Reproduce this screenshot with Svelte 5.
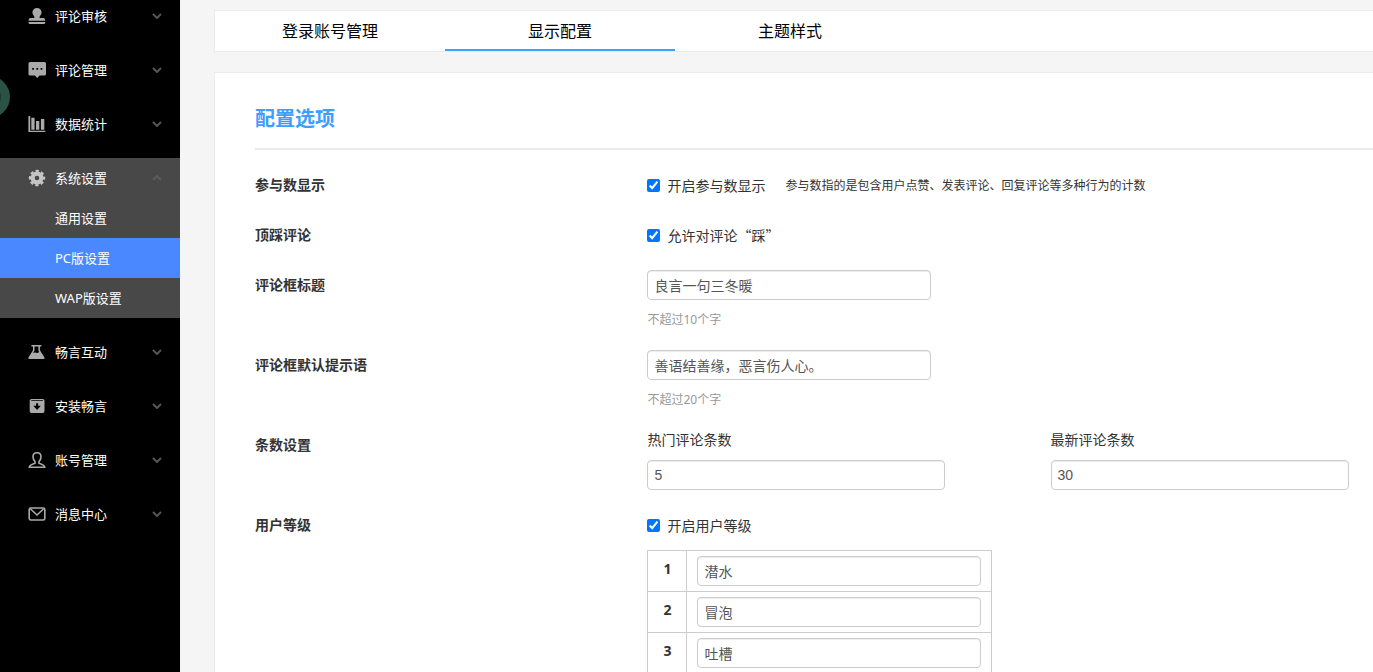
<script lang="ts">
  interface MenuItem {
    name: string;
    icon: string;
    children?: string[];
  }

  const menu: MenuItem[] = [
    { name: '评论审核', icon: 'stamp' },
    { name: '评论管理', icon: 'comment' },
    { name: '数据统计', icon: 'chart' },
    { name: '系统设置', icon: 'gear', children: ['通用设置', 'PC版设置', 'WAP版设置'] },
    { name: '畅言互动', icon: 'flask' },
    { name: '安装畅言', icon: 'install' },
    { name: '账号管理', icon: 'user' },
    { name: '消息中心', icon: 'mail' }
  ];

  const tabs = ['登录账号管理', '显示配置', '主题样式'];

  let openMenu = $state('系统设置');
  let activePage = $state('PC版设置');
  let activeTab = $state('显示配置');

  let showCount = $state(true);
  let allowDown = $state(true);
  let showLevel = $state(true);
  let boxTitle = $state('良言一句三冬暖');
  let boxHint = $state('善语结善缘，恶言伤人心。');
  let hotCount = $state('5');
  let newCount = $state('30');
  let levels = $state(['潜水', '冒泡', '吐槽']);

  function toggleMenu(item: MenuItem) {
    openMenu = openMenu === item.name ? '' : item.name;
  }
</script>

{#snippet menuIcon(icon: string)}
  <svg class="menu-icon" viewBox="0 0 18 18" aria-hidden="true">
    {#if icon === 'stamp'}
      <path d="M9 1a4.600 4.600 0 0 1 4.600 4.600c0 2.200-2.100 3-2.100 5.400h4q1.700 0 1.700 2.700H.5Q.5 11 2.200 11h4.300c0-2.400-2.100-3.200-2.100-5.400A4.600 4.600 0 0 1 9 1z" />
      <path d="M.5 14.900h16.700v.6q0 1.500-1.400 1.500H1.900q-1.400 0-1.400-1.500z" />
    {:else if icon === 'comment'}
      <path fill-rule="evenodd" d="M2 1h14.500q1.500 0 1.500 1.500V13q0 1.500-1.500 1.500h-5L9.200 17l-2.300-2.500H2Q.5 14.500.5 13V2.500Q.5 1 2 1zM4.200 7v1.700h1.700V7zM8.400 7v1.700h1.700V7zM12.600 7v1.700h1.700V7z" />
    {:else if icon === 'chart'}
      <path d="M.4 1h1.800v14.700h15.200V17H.4zM3.300 2.700h3.300v12H3.300zM8 6h3.300v8.700H8zM12.900 4h3.400v10.700h-3.400z" />
    {:else if icon === 'gear'}
      <circle class="gear-body" cx="9" cy="9" r="4.400" />
      <circle class="gear-teeth" cx="9" cy="9" r="7" />
    {:else if icon === 'flask'}
      <path fill-rule="evenodd" d="M3.400 2h10v1.400h-1.500v3.800l4.600 7.300q.5 1.500-1.200 1.500H1.600Q0 16 .4 14.500L5 7.200V3.400H3.400zM6.500 3.400v4.200L5 10q1.800-.8 3.200-.2t3-.9l-.8-1.300V3.400z" />
    {:else if icon === 'install'}
      <path fill-rule="evenodd" d="M3.500 2h11.200q1.800 0 1.800 1.800v10.400q0 1.800-1.800 1.800H3.500q-1.800 0-1.800-1.800V3.800Q1.700 2 3.500 2zM3.300 3.300v.8h11.600v-.8zM8.100 6.300v2.400H5.300L9.100 13l3.800-4.300h-2.800V6.300z" />
    {:else if icon === 'user'}
      <path class="line" d="M9 1.700c-2.500 0-4 1.700-4 4.100 0 2.200.8 3.500 2 4.700v1.700c-2.600 1-5.700 1.500-5.700 4.100h15.400c0-2.600-3.100-3.100-5.700-4.100v-1.700c1.200-1.200 2-2.500 2-4.700 0-2.400-1.500-4.100-4-4.100z" />
    {:else}
      <rect class="line" x="1.200" y="3" width="15.600" height="12" rx="1.600" />
      <path class="line" d="M2.500 4l6.500 6 6.500-6" />
    {/if}
  </svg>
{/snippet}

<div class="layout">
  <aside class="sidebar">
    <ul class="menu">
      {#each menu as item}
        {@const open = openMenu === item.name}
        <li class="menu-group" class:open>
          <button class="menu-item" aria-expanded={open} onclick={() => toggleMenu(item)}>
            {@render menuIcon(item.icon)}
            <span>{item.name}</span>
            <svg class="arrow" viewBox="0 0 10 6" aria-hidden="true">
              <path d={open ? 'M1 5l4-4 4 4' : 'M1 1l4 4 4-4'} />
            </svg>
          </button>
          {#if open && item.children}
            {#each item.children as child}
              <a
                class="sub-item"
                class:active={activePage === child}
                href="#{child}"
                onclick={() => (activePage = child)}
              >{child}</a>
            {/each}
          {/if}
        </li>
      {/each}
    </ul>
    <div class="bubble"></div>
  </aside>

  <main class="content">
    <div class="tabs">
      {#each tabs as tab}
        <button class="tab" class:active={activeTab === tab} onclick={() => (activeTab = tab)}>{tab}</button>
      {/each}
    </div>

    <section class="panel">
      <h2 class="panel-title">配置选项</h2>

      <div class="row">
        <div class="row-label">参与数显示</div>
        <div class="row-field check-line">
          <label class="check"><input type="checkbox" bind:checked={showCount} />开启参与数显示</label>
          <span class="note">参与数指的是包含用户点赞、发表评论、回复评论等多种行为的计数</span>
        </div>
      </div>

      <div class="row">
        <div class="row-label">顶踩评论</div>
        <div class="row-field">
          <label class="check"><input type="checkbox" bind:checked={allowDown} />允许对评论“踩”</label>
        </div>
      </div>

      <div class="row">
        <label class="row-label" for="box-title">评论框标题</label>
        <div class="row-field">
          <input class="text" id="box-title" type="text" bind:value={boxTitle} />
          <p class="hint">不超过10个字</p>
        </div>
      </div>

      <div class="row">
        <label class="row-label" for="box-hint">评论框默认提示语</label>
        <div class="row-field">
          <input class="text" id="box-hint" type="text" bind:value={boxHint} />
          <p class="hint">不超过20个字</p>
        </div>
      </div>

      <div class="row">
        <div class="row-label">条数设置</div>
        <div class="row-field counts">
          <label class="count">热门评论条数<input class="text wide" type="text" bind:value={hotCount} /></label>
          <label class="count">最新评论条数<input class="text wide" type="text" bind:value={newCount} /></label>
        </div>
      </div>

      <div class="row">
        <div class="row-label">用户等级</div>
        <div class="row-field">
          <label class="check"><input type="checkbox" bind:checked={showLevel} />开启用户等级</label>
          <table class="levels">
            <tbody>
              {#each levels as _, i}
                <tr>
                  <th scope="row">{i + 1}</th>
                  <td><input class="text" type="text" aria-label="{i + 1}" bind:value={levels[i]} /></td>
                </tr>
              {/each}
            </tbody>
          </table>
        </div>
      </div>
    </section>
  </main>
</div>

<style>
  :global(body) {
    background: #f5f5f5;
    color: #333;
    font-family: 'Noto Sans', 'Noto Sans CJK SC', sans-serif;
    font-size: 14px;
    line-height: 20px;
  }

  .layout {
    display: flex;
    height: 100vh;
    overflow: hidden;
  }

  button {
    border: none;
    background: none;
    font-family: inherit;
    cursor: pointer;
  }

  /* Sidebar */
  .sidebar {
    position: relative;
    flex: 0 0 180px;
    background: #000;
    overflow: hidden;
  }

  .menu {
    display: flex;
    flex-direction: column;
    gap: 14px;
    margin: -4px 0 0;
    padding: 0;
    list-style: none;
  }

  .menu-group.open {
    background: #484848;
  }

  .menu-item {
    display: flex;
    align-items: center;
    width: 100%;
    height: 40px;
    padding: 0 18px 0 28px;
    color: #fff;
    font-size: 13px;
    line-height: 40px;
  }

  .menu-icon {
    width: 18px;
    height: 18px;
    margin-right: 9px;
    fill: #aaa;
  }

  .menu-icon .line {
    fill: none;
    stroke: #aaa;
    stroke-width: 1.6;
  }

  .menu-icon .gear-body {
    fill: none;
    stroke: #c4c4c4;
    stroke-width: 4.2;
  }

  /* eight teeth, one dash each */
  .menu-icon .gear-teeth {
    fill: none;
    stroke: #c4c4c4;
    stroke-width: 2.4;
    stroke-dasharray: 3.2 2.298;
    stroke-dashoffset: 1.6;
  }

  .arrow {
    width: 10px;
    height: 6px;
    margin-left: auto;
    fill: none;
    stroke: #555;
    stroke-width: 2;
  }

  .open .arrow {
    stroke: #5c5c5c;
  }

  .sub-item {
    display: block;
    padding-left: 55px;
    color: #fff;
    font-size: 13px;
    line-height: 40px;
    text-decoration: none;
  }

  .sub-item.active {
    background: #4a88ff;
  }

  .bubble {
    position: absolute;
    top: 76px;
    left: -32px;
    box-sizing: border-box;
    width: 42px;
    height: 42px;
    border: 9px solid #2a5345;
    border-radius: 50%;
    background: #1c3a30;
  }

  /* Content */
  .content {
    flex: 1;
    min-width: 0;
    padding: 10px 0 0 34px;
  }

  .tabs {
    display: flex;
    margin-bottom: 20px;
    border: 1px solid #ebebeb;
    border-right: none;
    background: #fff;
  }

  .tab {
    width: 230px;
    height: 40px;
    padding: 0;
    border-bottom: 2px solid transparent;
    color: #000;
    font-size: 16px;
  }

  .tab.active {
    border-bottom-color: #3ea1fa;
  }

  .panel {
    padding: 31px 0 40px 40px;
    border: 1px solid #ebebeb;
    border-right: none;
    background: #fff;
  }

  .panel-title {
    margin: 0 0 20px;
    padding-bottom: 14px;
    border-bottom: 2px solid #ebebeb;
    color: #3d9eff;
    font-size: 20px;
    font-weight: 700;
    line-height: 30px;
  }

  .row {
    display: flex;
    margin-bottom: 20px;
  }

  .row-label {
    flex: 0 0 35.1%;
    font-weight: 700;
    line-height: 30px;
  }

  .row-field {
    flex: 1;
    min-width: 0;
  }

  .check-line {
    display: flex;
    gap: 20px;
  }

  /* CJK face first, so that the quotes are full width */
  .check {
    display: flex;
    align-items: center;
    gap: 7px;
    height: 30px;
    font-family: 'Noto Sans CJK SC', sans-serif;
    white-space: nowrap;
  }

  .check input {
    width: 13px;
    height: 13px;
    margin: 0;
  }

  .note {
    height: 30px;
    font-size: 12px;
    line-height: 32px;
    white-space: nowrap;
  }

  .text {
    display: block;
    box-sizing: border-box;
    width: 284px;
    height: 30px;
    padding: 4px 6px;
    border: 1px solid #ccc;
    border-radius: 4px;
    background: #fff;
    box-shadow: inset 0 1px 1px rgba(0, 0, 0, 0.075);
    color: #555;
    font-family: 'Liberation Sans', 'Noto Sans CJK SC', sans-serif;
    font-size: 14px;
    line-height: 20px;
  }

  .text.wide {
    width: 298px;
    margin-top: 10px;
  }

  .hint {
    margin: 10px 0 0;
    color: #999;
    font-size: 12px;
  }

  .counts {
    display: grid;
    grid-template-columns: 5fr 4fr;
  }

  .levels {
    margin-top: 10px;
    border-collapse: collapse;
  }

  .levels th,
  .levels td {
    border: 1px solid #ccc;
    padding: 5px 10px;
    vertical-align: top;
  }

  .levels th {
    width: 18px;
    padding-top: 8px;
  }
</style>
